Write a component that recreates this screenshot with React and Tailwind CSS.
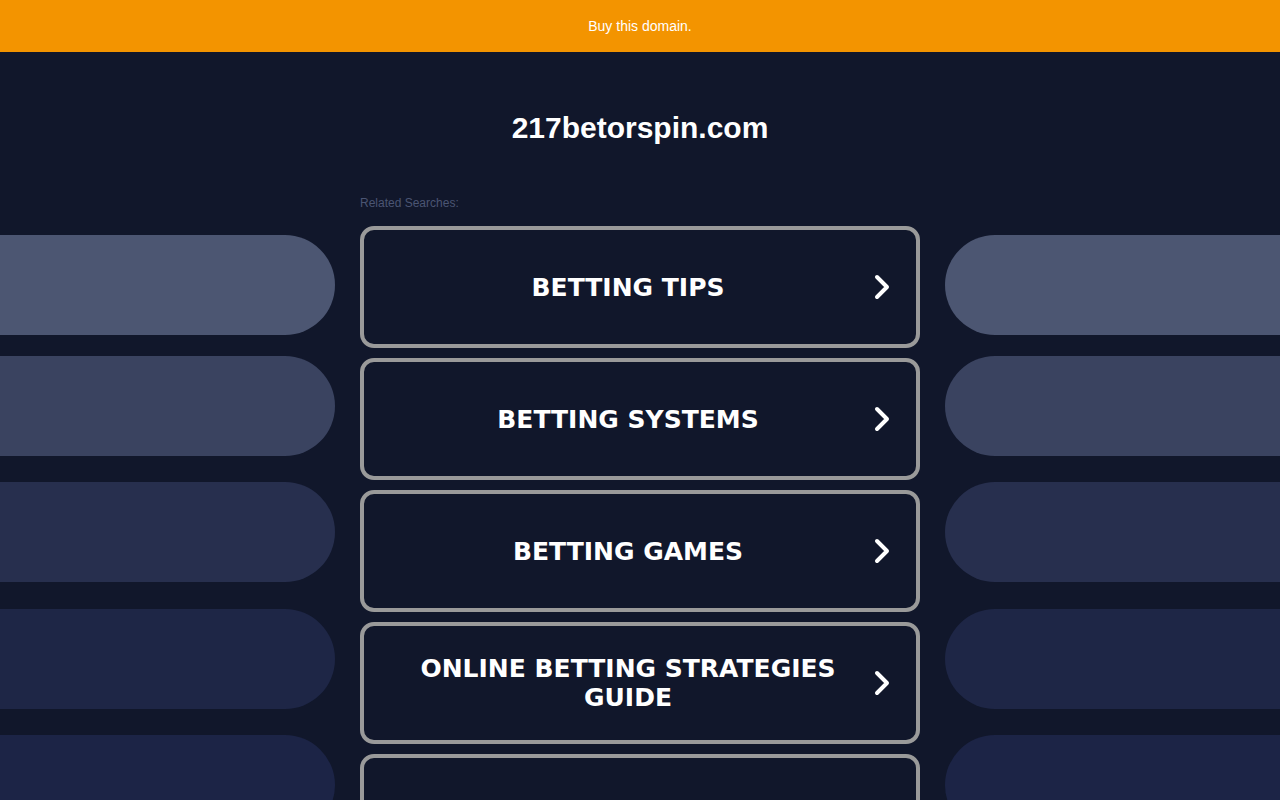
import React from 'react'

const searches = ['BETTING TIPS', 'BETTING SYSTEMS', 'BETTING GAMES', 'ONLINE BETTING STRATEGIES GUIDE', 'SPORTS BETTING ODDS']

const pills = [
  { top: 'mt-[183px]', color: 'bg-[#4c5672]' },
  { top: 'mt-[21px]', color: 'bg-[#3a4360]' },
  { top: 'mt-[26px]', color: 'bg-[#272f4e]' },
  { top: 'mt-[27px]', color: 'bg-[#1e2646]' },
  { top: 'mt-[26px]', color: 'bg-[#1c2446]' },
]

function Chevron() {
  return (
    <svg width="20" height="28" viewBox="0 0 20 28" fill="none" className="shrink-0">
      <path d="M5 4 L15 14 L5 24" stroke="#ffffff" strokeWidth="4" strokeLinecap="round" strokeLinejoin="round" />
    </svg>
  )
}

function PillColumn({ side }) {
  return (
    <div className="flex flex-col flex-1">
      {pills.map((p, i) => (
        <div
          key={i}
          className={`${p.top} ${p.color} h-[100px] shrink-0 ${side === 'left' ? 'rounded-r-[50px]' : 'rounded-l-[50px]'}`}
        />
      ))}
    </div>
  )
}

export default function App() {
  return (
    <div className="h-[800px] overflow-hidden bg-[#11172b]" style={{ fontFamily: '"Liberation Sans", Arial, sans-serif' }}>
      <div className="h-[52px] bg-[#f39400] flex items-center justify-center">
        <span className="text-white text-[14px]">Buy this domain.</span>
      </div>
      <div className="flex">
        <PillColumn side="left" />
        <div className="w-[560px] mx-[25px] shrink-0 flex flex-col">
          <h1 className="text-white font-bold text-[30px] text-center mt-[56px] leading-[40px]">217betorspin.com</h1>
          <div className="mt-[47px] text-[12px] text-[#4b5573] leading-[16px]">Related Searches:</div>
          <div className="mt-[15px] flex flex-col gap-[10px]">
            {searches.map((s) => (
              <div
                key={s}
                className="h-[122px] shrink-0 border-[4px] border-[#9a9a9a] rounded-[14px] flex items-center pl-[20px] pr-[24px]"
              >
                <span
                  className="flex-1 text-center text-white font-bold text-[25px] leading-[29px]"
                  style={{ fontFamily: '"DejaVu Sans", Verdana, sans-serif' }}
                >
                  {s}
                </span>
                <Chevron />
              </div>
            ))}
          </div>
        </div>
        <PillColumn side="right" />
      </div>
    </div>
  )
}
